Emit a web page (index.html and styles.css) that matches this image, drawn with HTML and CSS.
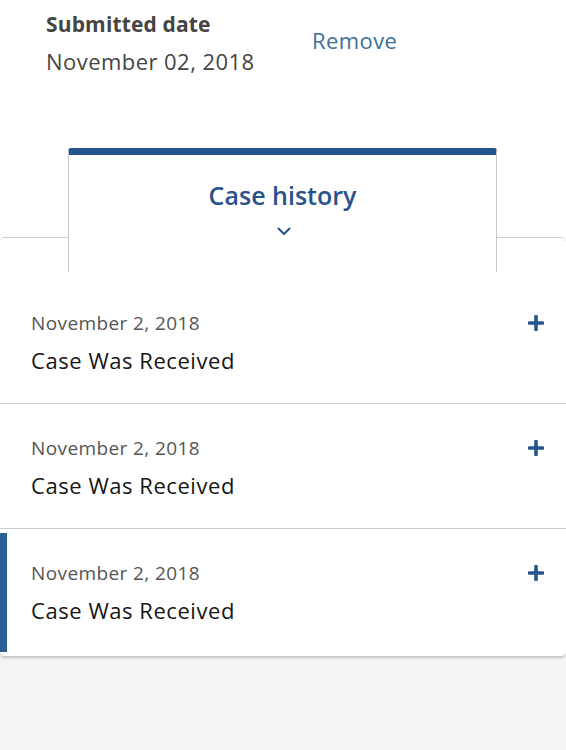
FILE: index.html
```html
<!DOCTYPE html>
<html>
<head>
<meta charset="utf-8">
<link rel="stylesheet" href="styles.css">
</head>
<body>
<div class="page">
  <section class="summary">
    <div class="summary-info">
      <div class="label">Submitted date</div>
      <div class="value">November 02, 2018</div>
    </div>
    <a class="remove">Remove</a>
  </section>

  <div class="tab">
    <div class="tab-title">Case history</div>
    <svg class="chevron" width="14" height="9" viewBox="0 0 14 9"><path d="M1.5 1.5 L7 7 L12.5 1.5" fill="none" stroke="#27528a" stroke-width="2" stroke-linecap="round" stroke-linejoin="round"/></svg>
  </div>

  <section class="card">
    <div class="row">
      <div class="row-text">
        <div class="date">November 2, 2018</div>
        <div class="title">Case Was Received</div>
      </div>
      <svg class="plus" width="16" height="16" viewBox="0 0 16 16"><path d="M8 1.5 V14.5 M1.5 8 H14.5" stroke="#24558f" stroke-width="3.6" stroke-linecap="round"/></svg>
    </div>
    <div class="row">
      <div class="row-text">
        <div class="date">November 2, 2018</div>
        <div class="title">Case Was Received</div>
      </div>
      <svg class="plus" width="16" height="16" viewBox="0 0 16 16"><path d="M8 1.5 V14.5 M1.5 8 H14.5" stroke="#24558f" stroke-width="3.6" stroke-linecap="round"/></svg>
    </div>
    <div class="row active">
      <div class="row-text">
        <div class="date">November 2, 2018</div>
        <div class="title">Case Was Received</div>
      </div>
      <svg class="plus" width="16" height="16" viewBox="0 0 16 16"><path d="M8 1.5 V14.5 M1.5 8 H14.5" stroke="#24558f" stroke-width="3.6" stroke-linecap="round"/></svg>
    </div>
  </section>

  <div class="footer"></div>
</div>
</body>
</html>
```

FILE: styles.css
```css
html, body {
  margin: 0;
  padding: 0;
}
body {
  background: #ffffff;
  font-family: "Open Sans", "Liberation Sans", sans-serif;
  width: 566px;
  height: 750px;
  overflow: hidden;
}
.page {
  display: flex;
  flex-direction: column;
  height: 750px;
  background: #ffffff;
}
.summary {
  display: flex;
  align-items: flex-start;
  padding: 9px 0 0 46px;
  height: 148px;
  flex-shrink: 0;
  box-sizing: border-box;
}
.summary-info {
  width: 266px;
}
.label {
  font-size: 21px;
  font-weight: 700;
  color: #454545;
  line-height: 30px;
  letter-spacing: 0.15px;
}
.value {
  font-size: 22px;
  color: #454545;
  line-height: 30px;
  margin-top: 7px;
  letter-spacing: 0.45px;
}
.remove {
  font-size: 22px;
  color: #3d7097;
  line-height: 30px;
  margin-top: 16px;
  letter-spacing: 0.4px;
}
.tab {
  position: relative;
  z-index: 2;
  flex-shrink: 0;
  margin: 0 69px -35px 68px;
  height: 117px;
  background: #ffffff;
  border-top: 7px solid #24558f;
  border-left: 1px solid #c8c8c8;
  border-right: 1px solid #c8c8c8;
  border-radius: 3px 3px 0 0;
  display: flex;
  flex-direction: column;
  align-items: center;
}
.tab-title {
  font-size: 25px;
  font-weight: 600;
  color: #27528a;
  line-height: 34px;
  margin-top: 23px;
}
.chevron {
  margin-top: 15px;
  margin-left: 3px;
}
.card {
  position: relative;
  z-index: 1;
  flex-shrink: 0;
  background: #ffffff;
  border-top: 1px solid #cfcfcf;
  border-radius: 5px;
  padding-top: 41px;
  box-shadow: 0 2px 3px rgba(0, 0, 0, 0.22);
}
.row {
  position: relative;
  display: flex;
  justify-content: space-between;
  align-items: flex-start;
  padding: 32px 22px 29px 31px;
  border-bottom: 1px solid #cccccc;
}
.row:last-child {
  border-bottom: none;
  padding-bottom: 32px;
}
.row.active::before {
  content: "";
  position: absolute;
  left: 0;
  top: 4px;
  bottom: 4px;
  width: 7px;
  background: #2a5f91;
}
.date {
  font-size: 19px;
  color: #555555;
  line-height: 24px;
  letter-spacing: 0.4px;
}
.title {
  font-size: 22px;
  color: #161616;
  line-height: 28px;
  margin-top: 11px;
  letter-spacing: 0.55px;
}
.plus {
  margin-top: 4px;
}
.footer {
  flex: 1;
  background: #f5f5f5;
}
```
